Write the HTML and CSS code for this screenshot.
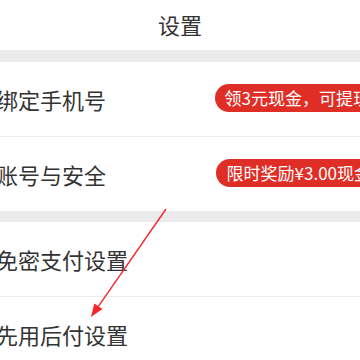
FILE: index.html
```html
<!DOCTYPE html>
<html lang="zh-CN">
<head>
<meta charset="utf-8">
<title>设置</title>
<link rel="stylesheet" href="styles.css">
</head>
<body>
<div class="page">
  <header class="header">设置</header>
  <div class="gap gap-first"></div>
  <section class="group">
    <div class="row">
      <span class="label">绑定手机号</span>
      <span class="badge">领3元现金，可提现</span>
    </div>
    <div class="row">
      <span class="label">账号与安全</span>
      <span class="badge badge-second">限时奖励¥3.00现金</span>
    </div>
  </section>
  <div class="gap gap-second"></div>
  <section class="group">
    <div class="row">
      <span class="label">免密支付设置</span>
    </div>
    <div class="row">
      <span class="label">先用后付设置</span>
    </div>
  </section>
</div>
<svg class="arrow" width="360" height="360" viewBox="0 0 360 360" aria-hidden="true">
  <line x1="166" y1="209" x2="98.4" y2="306.3" stroke="#f5262a" stroke-width="1.4"/>
  <polygon points="91,317 102.5,309.1 94.3,303.4" fill="#f5262a"/>
</svg>
</body>
</html>
```
FILE: styles.css
```css
html, body {
  margin: 0;
  padding: 0;
  background: #ffffff;
  overflow: hidden;
  width: 360px;
  height: 360px;
}
body {
  position: relative;
  font-family: "Noto Sans CJK SC", "Noto Sans", sans-serif;
  color: #333333;
}
.page {
  width: 386px;
  margin-left: -4px;
}
.header {
  height: 50px;
  display: flex;
  align-items: center;
  justify-content: center;
  font-size: 22px;
  padding: 0 22px 3px 4px;
  box-sizing: border-box;
  color: #333;
}
.gap {
  background: #ebebeb;
}
.gap-first { height: 12px; }
.gap-second { height: 11px; }
.group {
  display: flex;
  flex-direction: column;
}
.row {
  height: 74px;
  display: flex;
  align-items: center;
  justify-content: space-between;
  font-size: 22px;
}
.row + .row {
  border-top: 1px solid #ececec;
}
.label {
  white-space: nowrap;
  line-height: 1;
}
.badge {
  height: 28px;
  line-height: 28px;
  border-radius: 14px;
  background: #df2e26;
  color: #fff;
  font-size: 17px;
  padding: 0 12px 0 10px;
  white-space: nowrap;
  margin-top: -2px;
}
.badge-second {
  padding-left: 11px;
  margin-right: -1px;
}
.arrow {
  position: absolute;
  left: 0;
  top: 0;
  pointer-events: none;
}
```
